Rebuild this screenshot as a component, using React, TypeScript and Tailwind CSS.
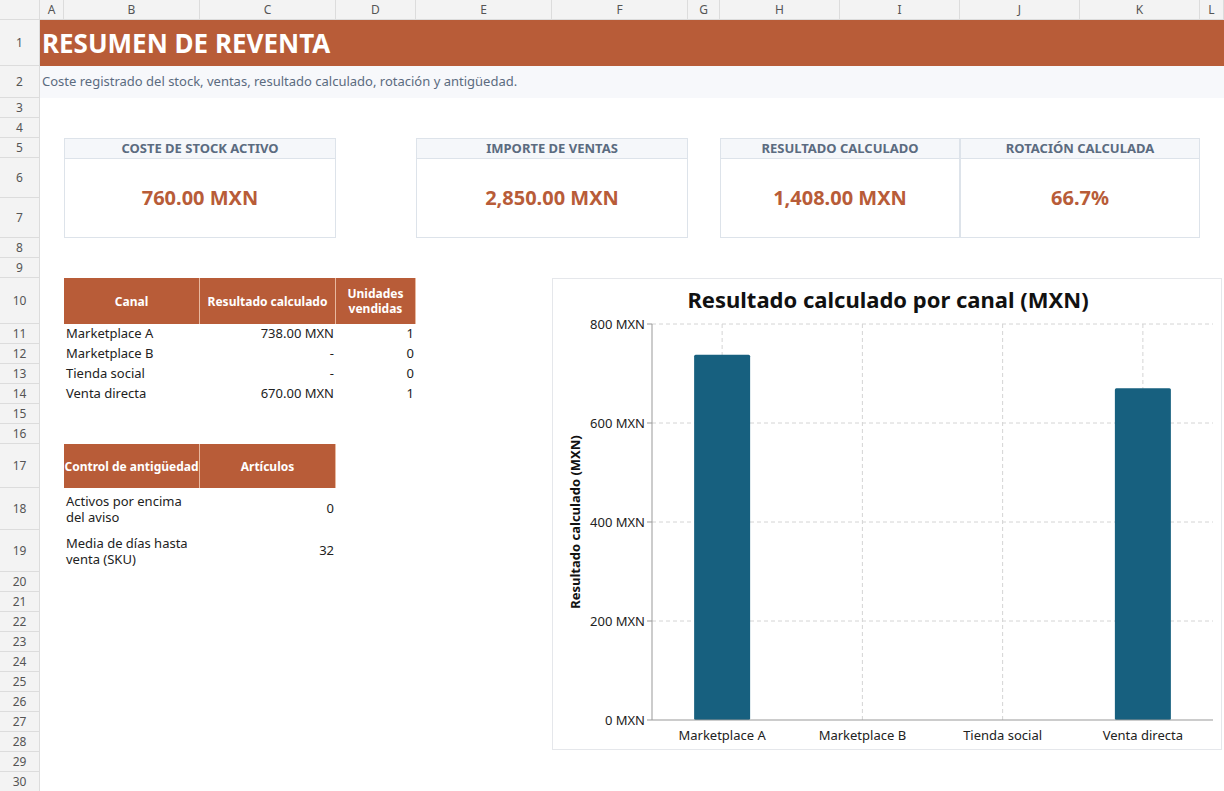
const cols = [
  ["A", 24], ["B", 136], ["C", 136], ["D", 80], ["E", 136], ["F", 136], ["G", 32],
  ["H", 120], ["I", 120], ["J", 120], ["K", 120], ["L", 24],
] as const

const rowHeights = [46, 32, 20, 20, 20, 40, 40, 20, 20, 46, 20, 20, 20, 20, 20, 20, 44, 42, 42, 20, 20, 20, 20, 20, 20, 20, 20, 20, 20, 20]

const channels = [
  { name: "Marketplace A", result: "738.00 MXN", units: 1, value: 738 },
  { name: "Marketplace B", result: "-", units: 0, value: 0 },
  { name: "Tienda social", result: "-", units: 0, value: 0 },
  { name: "Venta directa", result: "670.00 MXN", units: 1, value: 670 },
]

function Kpi({ label, value, className }: { label: string; value: string; className: string }) {
  return (
    <div className={`flex flex-col border border-[#dde3ea] bg-white ${className}`}>
      <div className="h-[20px] flex items-center justify-center bg-[#f5f7fa] border-b border-[#dde3ea] text-[13px] font-bold text-[#5b6b80]">
        {label}
      </div>
      <div className="flex-1 flex items-center justify-center text-[20px] font-bold text-[#b85c38]">{value}</div>
    </div>
  )
}

function Chart() {
  const x0 = 99, x1 = 660, y0 = 45, y1 = 441
  const step = (x1 - x0) / 4
  const ticks = [0, 200, 400, 600, 800]
  const yOf = (v: number) => y1 - (v / 800) * (y1 - y0)
  return (
    <svg width="670" height="472" className="block">
      <text x="335" y="29" textAnchor="middle" fontSize="22" fontWeight="bold" fill="#111">Resultado calculado por canal (MXN)</text>
      {ticks.slice(1).map((t) => (
        <line key={t} x1={x0} x2={x1} y1={yOf(t)} y2={yOf(t)} stroke="#d4d4d4" strokeDasharray="4 3" />
      ))}
      {channels.map((c, i) => (
        <line key={c.name} x1={x0 + step * (i + 0.5)} x2={x0 + step * (i + 0.5)} y1={y0} y2={y1} stroke="#d4d4d4" strokeDasharray="4 3" />
      ))}
      {channels.map((c, i) =>
        c.value > 0 ? (
          <rect key={c.name} x={x0 + step * (i + 0.5) - 28} y={yOf(c.value)} width="56" height={y1 - yOf(c.value)} rx="1.5" fill="#17607f" />
        ) : null
      )}
      <line x1={x0} x2={x0} y1={y0} y2={y1} stroke="#999" />
      <line x1={x0} x2={x1} y1={y1} y2={y1} stroke="#999" />
      {ticks.map((t) => (
        <g key={t}>
          <line x1={x0 - 5} x2={x0} y1={yOf(t)} y2={yOf(t)} stroke="#999" />
          <text x={x0 - 7} y={yOf(t) + 4.5} textAnchor="end" fontSize="13" fill="#222">{t} MXN</text>
        </g>
      ))}
      {channels.map((c, i) => (
        <text key={c.name} x={x0 + step * (i + 0.5)} y="461" textAnchor="middle" fontSize="13" fill="#222">{c.name}</text>
      ))}
      <text transform="translate(27 243) rotate(-90)" textAnchor="middle" fontSize="13" fontWeight="bold" fill="#111">Resultado calculado (MXN)</text>
    </svg>
  )
}

export default function App() {
  const th = "bg-[#b85c38] text-white font-bold text-[12px] flex items-center justify-center text-center leading-[15px] border-r border-[#e8b89f]"
  return (
    <div className="w-[1224px] h-[791px] overflow-hidden bg-white font-['Liberation_Sans',Arial,sans-serif] text-[#222]">
      {/* column letters */}
      <div className="flex h-[20px] bg-[#f3f3f3] border-b border-[#dcdcdc]">
        <div className="w-[40px] shrink-0 border-r border-[#dcdcdc]" />
        {cols.map(([l, w]) => (
          <div key={l} style={{ width: w }} className="shrink-0 border-r border-[#dcdcdc] flex items-center justify-center text-[12px] text-[#555]">
            {l}
          </div>
        ))}
      </div>
      <div className="flex">
        {/* row numbers */}
        <div className="w-[40px] shrink-0 flex flex-col bg-[#f3f3f3] border-r border-[#dcdcdc]">
          {rowHeights.map((h, i) => (
            <div key={i} style={{ height: h }} className="shrink-0 border-b border-[#dcdcdc] flex items-center justify-center text-[12px] text-[#555]">
              {i + 1}
            </div>
          ))}
        </div>
        {/* sheet body */}
        <div className="grid grid-cols-[24px_136px_136px_80px_136px_136px_32px_120px_120px_120px_120px_24px] grid-rows-[46px_32px_20px_20px_20px_40px_40px_20px_20px_46px_20px_20px_20px_20px_20px_20px_44px_42px_42px_repeat(11,20px)]">
          <div className="row-start-1 col-start-1 col-span-12 bg-[#b85c38] text-white text-[26px] font-bold flex items-center px-[2px]">
            RESUMEN DE REVENTA
          </div>
          <div className="row-start-2 col-start-1 col-span-12 bg-[#f7f8fb] text-[13px] text-[#5b6b80] flex items-center px-[2px]">
            Coste registrado del stock, ventas, resultado calculado, rotación y antigüedad.
          </div>

          <Kpi className="row-start-5 row-span-3 col-start-2 col-span-2" label="COSTE DE STOCK ACTIVO" value="760.00 MXN" />
          <Kpi className="row-start-5 row-span-3 col-start-5 col-span-2" label="IMPORTE DE VENTAS" value="2,850.00 MXN" />
          <Kpi className="row-start-5 row-span-3 col-start-8 col-span-2" label="RESULTADO CALCULADO" value="1,408.00 MXN" />
          <Kpi className="row-start-5 row-span-3 col-start-10 col-span-2" label="ROTACIÓN CALCULADA" value="66.7%" />

          {/* canal table */}
          <div className={`row-start-10 col-start-2 ${th}`}>Canal</div>
          <div className={`row-start-10 col-start-3 ${th}`}>Resultado calculado</div>
          <div className={`row-start-10 col-start-4 ${th}`}>Unidades<br />vendidas</div>
          {channels.map((c, i) => (
            <div key={c.name} className="contents">
              <div style={{ gridRow: 11 + i }} className="col-start-2 text-[13px] flex items-center px-[2px]">{c.name}</div>
              <div style={{ gridRow: 11 + i }} className="col-start-3 text-[13px] flex items-center justify-end px-[2px]">{c.result}</div>
              <div style={{ gridRow: 11 + i }} className="col-start-4 text-[13px] flex items-center justify-end px-[2px]">{c.units}</div>
            </div>
          ))}

          {/* antigüedad table */}
          <div className={`row-start-17 col-start-2 ${th}`}>Control de antigüedad</div>
          <div className={`row-start-17 col-start-3 ${th}`}>Artículos</div>
          <div className="row-start-18 col-start-2 text-[13px] leading-[16px] flex items-center px-[2px]">Activos por encima<br />del aviso</div>
          <div className="row-start-18 col-start-3 text-[13px] flex items-center justify-end px-[2px]">0</div>
          <div className="row-start-19 col-start-2 text-[13px] leading-[16px] flex items-center px-[2px]">Media de días hasta<br />venta (SKU)</div>
          <div className="row-start-19 col-start-3 text-[13px] flex items-center justify-end px-[2px]">32</div>

          {/* chart */}
          <div className="row-start-10 row-span-19 col-start-6 col-span-7 mr-[2px] mb-[2px] border border-[#e5e7eb] bg-white overflow-hidden">
            <Chart />
          </div>
        </div>
      </div>
    </div>
  )
}
